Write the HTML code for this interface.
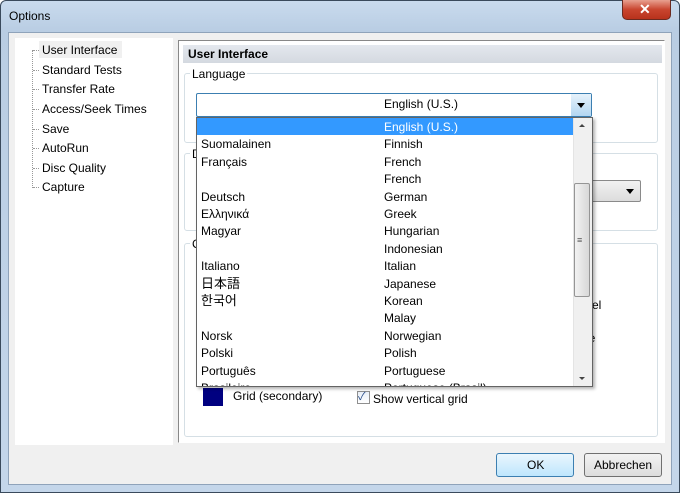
<!DOCTYPE html>
<html><head><meta charset="utf-8"><style>
*{margin:0;padding:0;box-sizing:border-box}
body{width:680px;height:493px;overflow:hidden;background:#fff;font-family:"Liberation Sans","Noto Sans CJK JP",sans-serif;font-size:12px;color:#000;position:relative}
.a{position:absolute}
.t{position:absolute;white-space:nowrap;line-height:14px}
</style></head><body>
<div class="a" style="left:0;top:0;width:680px;height:493px;border:1px solid #3a4a5c;border-radius:6px 6px 0 0;background:linear-gradient(180deg,#c9dbee 0,#b9cde3 30px,#c4d6ea 100%)"></div>
<div class="t" style="left:9px;top:9px;font-size:12px">Options</div>
<div class="a" style="left:622px;top:0;width:49px;height:20px;border:1px solid #6b2a20;border-top:none;border-radius:0 0 5px 5px;background:linear-gradient(180deg,#e8a090,#c9452f 50%,#b8321c)"></div>
<div class="t" style="left:639px;top:2px;color:#fff;font-weight:bold;font-size:14px">✕</div>
<div class="a" style="left:8px;top:32px;width:664px;height:453px;background:#f0f0f0;border:1px solid #8fa3ba"></div>
<div class="a" style="left:15px;top:38px;width:158px;height:407px;background:#fff"></div>
<div class="a" style="left:32px;top:50px;width:1px;height:138px;border-left:1px dotted #999"></div>
<div class="a" style="left:39px;top:41px;width:83px;height:17px;background:#f0f0f0"></div>
<div class="t" style="left:42px;top:43px">User Interface</div>
<div class="t" style="left:42px;top:63px">Standard Tests</div>
<div class="t" style="left:42px;top:82px">Transfer Rate</div>
<div class="t" style="left:42px;top:102px">Access/Seek Times</div>
<div class="t" style="left:42px;top:122px">Save</div>
<div class="t" style="left:42px;top:141px">AutoRun</div>
<div class="t" style="left:42px;top:161px">Disc Quality</div>
<div class="t" style="left:42px;top:180px">Capture</div>
<div class="a" style="left:33px;top:50px;width:6px;border-top:1px dotted #999"></div>
<div class="a" style="left:33px;top:70px;width:6px;border-top:1px dotted #999"></div>
<div class="a" style="left:33px;top:89px;width:6px;border-top:1px dotted #999"></div>
<div class="a" style="left:33px;top:109px;width:6px;border-top:1px dotted #999"></div>
<div class="a" style="left:33px;top:129px;width:6px;border-top:1px dotted #999"></div>
<div class="a" style="left:33px;top:148px;width:6px;border-top:1px dotted #999"></div>
<div class="a" style="left:33px;top:168px;width:6px;border-top:1px dotted #999"></div>
<div class="a" style="left:33px;top:187px;width:6px;border-top:1px dotted #999"></div>

<div class="a" style="left:178px;top:40px;width:487px;height:403px;border:1px solid #888;border-right-color:#fff;border-bottom-color:#fff;background:#fff"></div>
<div class="a" style="left:183px;top:45px;width:479px;height:18px;background:linear-gradient(180deg,#e4e8ee,#d4d9e0)"></div>
<div class="t" style="left:188px;top:47px;font-weight:bold">User Interface</div>
<div class="a" style="left:184px;top:73px;width:474px;height:70px;border:1px solid #d5dfe5;border-radius:3px"></div>
<div class="t" style="left:190px;top:67px;background:#fff;padding:0 2px">Language</div>
<div class="a" style="left:184px;top:153px;width:474px;height:78px;border:1px solid #d5dfe5;border-radius:3px"></div>
<div class="t" style="left:190px;top:147px;background:#fff;padding:0 2px">D</div>
<div class="a" style="left:580px;top:180px;width:61px;height:22px;border:1px solid #8a8a8a;border-radius:2px;background:linear-gradient(#f2f2f2,#dcdcdc)"></div>
<div class="a" style="left:626px;top:189px;border:4px solid transparent;border-top:5px solid #000;border-bottom:none"></div>
<div class="a" style="left:184px;top:243px;width:474px;height:194px;border:1px solid #d5dfe5;border-radius:3px"></div>
<div class="t" style="left:190px;top:237px;background:#fff;padding:0 2px">C</div>
<div class="t" style="left:586px;top:298px">vel</div>
<div class="t" style="left:586px;top:331px">le</div>
<div class="a" style="left:203px;top:388px;width:20px;height:18px;background:#000080"></div>
<div class="t" style="left:233px;top:389px">Grid (secondary)</div>
<div class="a" style="left:357px;top:391px;width:13px;height:13px;border:1px solid #8f8f8f;background:linear-gradient(#e8eef6,#fff)"></div>
<div class="t" style="left:358px;top:390px;font-size:11px;color:#2a4e8a">✓</div>
<div class="t" style="left:373px;top:392px">Show vertical grid</div>

<div class="a" style="left:196px;top:93px;width:396px;height:24px;border:1px solid #3c7fb1;border-radius:2px;background:#fff"></div>
<div class="t" style="left:384px;top:97px">English (U.S.)</div>
<div class="a" style="left:571px;top:94px;width:20px;height:22px;background:linear-gradient(#e6f2fb,#b3d6f1)"></div>
<div class="a" style="left:577px;top:103px;border:4px solid transparent;border-top:5px solid #000;border-bottom:none"></div>

<div class="a" style="left:196px;top:117px;width:397px;height:270px;border:1px solid #646464;background:#fff;box-shadow:2px 2px 3px rgba(0,0,0,.3)"></div>
<div class="a" style="left:197px;top:118px;width:376px;height:17px;background:#3399ff"></div>
<div class="a" style="left:573px;top:118px;width:19px;height:268px;background:#f0f0f0;border-left:1px solid #e4e4e4"></div>
<div class="a" style="left:574px;top:183px;width:16px;height:114px;border:1px solid #959595;border-radius:2px;background:linear-gradient(90deg,#f2f2f2,#d8d8d8)"></div>
<div class="t" style="left:577px;top:233px;font-size:9px;color:#555">≡</div>
<div class="a" style="left:579px;top:124px;border:3px solid transparent;border-bottom:3px solid #444;border-top:none"></div>
<div class="a" style="left:579px;top:377px;border:3px solid transparent;border-top:3px solid #444;border-bottom:none"></div>
<div style="position:absolute;left:197px;top:118px;width:376px;height:268px;overflow:hidden">
<div class="t" style="left:187px;top:2px;color:#fff">English (U.S.)</div>
<div class="t" style="left:4px;top:19.4px">Suomalainen</div><div class="t" style="left:187px;top:19.4px">Finnish</div>
<div class="t" style="left:4px;top:36.8px">Français</div><div class="t" style="left:187px;top:36.8px">French</div>
<div class="t" style="left:187px;top:54.2px">French</div>
<div class="t" style="left:4px;top:71.6px">Deutsch</div><div class="t" style="left:187px;top:71.6px">German</div>
<div class="t" style="left:4px;top:89px">Ελληνικά</div><div class="t" style="left:187px;top:89px">Greek</div>
<div class="t" style="left:4px;top:106.4px">Magyar</div><div class="t" style="left:187px;top:106.4px">Hungarian</div>
<div class="t" style="left:187px;top:123.8px">Indonesian</div>
<div class="t" style="left:4px;top:141.2px">Italiano</div><div class="t" style="left:187px;top:141.2px">Italian</div>
<div class="t" style="left:4px;top:158.6px;font-size:13px">日本語</div><div class="t" style="left:187px;top:158.6px">Japanese</div>
<div class="t" style="left:4px;top:176px;font-size:13px">한국어</div><div class="t" style="left:187px;top:176px">Korean</div>
<div class="t" style="left:187px;top:193.4px">Malay</div>
<div class="t" style="left:4px;top:210.8px">Norsk</div><div class="t" style="left:187px;top:210.8px">Norwegian</div>
<div class="t" style="left:4px;top:228.2px">Polski</div><div class="t" style="left:187px;top:228.2px">Polish</div>
<div class="t" style="left:4px;top:245.6px">Português</div><div class="t" style="left:187px;top:245.6px">Portuguese</div>
<div class="t" style="left:4px;top:263px">Brasileiro</div><div class="t" style="left:187px;top:263px">Portuguese (Brasil)</div>
</div>

<div class="a" style="left:496px;top:453px;width:78px;height:24px;border:1px solid #3c7fb1;border-radius:3px;background:linear-gradient(#eaf6fd,#bee6fd)"></div>
<div class="t" style="left:527px;top:458px">OK</div>
<div class="a" style="left:584px;top:453px;width:78px;height:24px;border:1px solid #707070;border-radius:3px;background:linear-gradient(#f2f2f2,#dddddd)"></div>
<div class="t" style="left:594px;top:458px">Abbrechen</div>
</body></html>
